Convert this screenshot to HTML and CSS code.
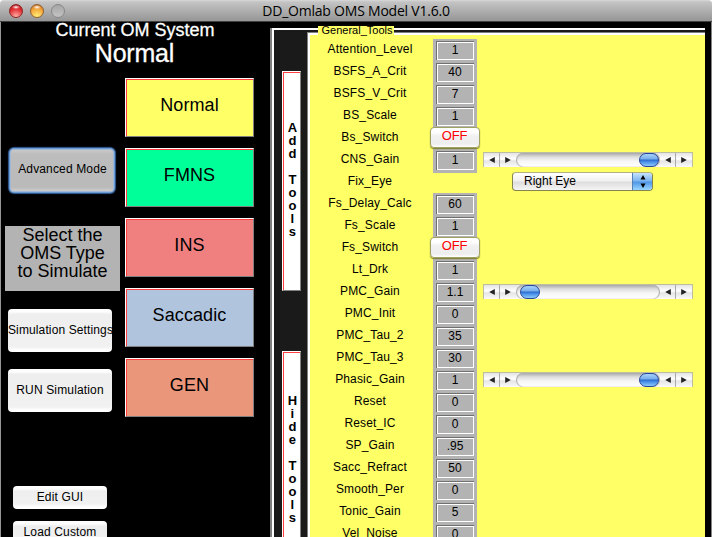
FILE: index.html
```html
<!DOCTYPE html>
<html lang="en">
<head>
<meta charset="utf-8">
<title>DD_Omlab OMS Model V1.6.0</title>
<link rel="stylesheet" href="styles.css">
</head>
<body>
<svg class="defs" aria-hidden="true">
  <symbol id="left" viewBox="0 0 6 6"><path d="M5.8 0V6L0.2 3z"/></symbol>
  <symbol id="right" viewBox="0 0 6 6"><path d="M0.2 0V6L5.8 3z"/></symbol>
</svg>
<div class="window">
  <header class="titlebar">
    <div class="lights"><i class="light red"></i><i class="light amber"></i><i class="light off"></i></div>
    <h1 class="title">DD_Omlab OMS Model V1.6.0</h1>
  </header>
  <main class="content">
    <section class="side">
      <div class="current">Current OM System</div>
      <div class="current-name">Normal</div>
      <div class="side-cols">
        <div class="actions">
          <button class="push advanced">Advanced Mode</button>
          <div class="hint">Select the<br>OMS Type<br>to Simulate</div>
          <button class="push settings">Simulation Settings</button>
          <button class="push run">RUN Simulation</button>
          <button class="push small edit">Edit GUI</button>
          <button class="push small load">Load Custom</button>
        </div>
        <div class="types">
          <button class="type normal">Normal</button>
          <button class="type fmns">FMNS</button>
          <button class="type ins">INS</button>
          <button class="type saccadic">Saccadic</button>
          <button class="type gen">GEN</button>
        </div>
      </div>
    </section>
    <section class="panel">
      <div class="strip">
        <button class="vert add">A<br>d<br>d<br><br>T<br>o<br>o<br>l<br>s</button>
        <button class="vert hide">H<br>i<br>d<br>e<br><br>T<br>o<br>o<br>l<br>s</button>
      </div>
      <div class="tools">
        <div class="legend">General_Tools</div>
        <div class="row"><span class="label">Attention_Level</span><div class="cell"><span class="value">1</span></div></div>
        <div class="row"><span class="label">BSFS_A_Crit</span><div class="cell"><span class="value">40</span></div></div>
        <div class="row"><span class="label">BSFS_V_Crit</span><div class="cell"><span class="value">7</span></div></div>
        <div class="row"><span class="label">BS_Scale</span><div class="cell"><span class="value">1</span></div></div>
        <div class="row"><span class="label">Bs_Switch</span><button class="toggle">OFF</button></div>
        <div class="row"><span class="label">CNS_Gain</span><div class="cell"><span class="value">1</span></div>
          <div class="slider"><b><svg><use href="#left"/></svg></b><b><svg><use href="#right"/></svg></b><div class="track high"><i></i></div><b><svg><use href="#left"/></svg></b><b><svg><use href="#right"/></svg></b></div></div>
        <div class="row"><span class="label">Fix_Eye</span><div class="select"><span>Right Eye</span><em><svg viewBox="0 0 6 13"><path d="M3 0L5.5 4.6H0.5zM3 13L5.5 8.4H0.5z"/></svg></em></div></div>
        <div class="row"><span class="label">Fs_Delay_Calc</span><div class="cell"><span class="value">60</span></div></div>
        <div class="row"><span class="label">Fs_Scale</span><div class="cell"><span class="value">1</span></div></div>
        <div class="row"><span class="label">Fs_Switch</span><button class="toggle">OFF</button></div>
        <div class="row"><span class="label">Lt_Drk</span><div class="cell"><span class="value">1</span></div></div>
        <div class="row"><span class="label">PMC_Gain</span><div class="cell"><span class="value">1.1</span></div>
          <div class="slider"><b><svg><use href="#left"/></svg></b><b><svg><use href="#right"/></svg></b><div class="track"><i></i></div><b><svg><use href="#left"/></svg></b><b><svg><use href="#right"/></svg></b></div></div>
        <div class="row"><span class="label">PMC_Init</span><div class="cell"><span class="value">0</span></div></div>
        <div class="row"><span class="label">PMC_Tau_2</span><div class="cell"><span class="value">35</span></div></div>
        <div class="row"><span class="label">PMC_Tau_3</span><div class="cell"><span class="value">30</span></div></div>
        <div class="row"><span class="label">Phasic_Gain</span><div class="cell"><span class="value">1</span></div>
          <div class="slider"><b><svg><use href="#left"/></svg></b><b><svg><use href="#right"/></svg></b><div class="track high"><i></i></div><b><svg><use href="#left"/></svg></b><b><svg><use href="#right"/></svg></b></div></div>
        <div class="row"><span class="label">Reset</span><div class="cell"><span class="value">0</span></div></div>
        <div class="row"><span class="label">Reset_IC</span><div class="cell"><span class="value">0</span></div></div>
        <div class="row"><span class="label">SP_Gain</span><div class="cell"><span class="value">.95</span></div></div>
        <div class="row"><span class="label">Sacc_Refract</span><div class="cell"><span class="value">50</span></div></div>
        <div class="row"><span class="label">Smooth_Per</span><div class="cell"><span class="value">0</span></div></div>
        <div class="row"><span class="label">Tonic_Gain</span><div class="cell"><span class="value">5</span></div></div>
        <div class="row"><span class="label">Vel_Noise</span><div class="cell"><span class="value">0</span></div></div>
      </div>
    </section>
  </main>
</div>
</body>
</html>
```
FILE: styles.css
```css
* { box-sizing: border-box; }
html, body { margin: 0; height: 537px; overflow: hidden; background: #fff; }
body { font: 12px "Liberation Sans", Arial, sans-serif; letter-spacing: .15px; color: #000; }
button { margin: 0; padding: 0; border: 0; font: inherit; letter-spacing: inherit; color: inherit; white-space: nowrap; }
.defs { position: absolute; width: 0; height: 0; }

.window { width: 712px; height: 537px; overflow: hidden; display: flex; flex-direction: column; }
.titlebar {
  flex: none; height: 22px; display: grid; grid-template-columns: 65px 1fr 65px; align-items: center;
  background: linear-gradient(#d8d8d8 0, #c4c4c4 2px, #989898 20px); border-bottom: 1px solid #404040;
  border-radius: 4px 4px 0 0;
}
.lights { display: flex; gap: 7px; padding-left: 9px; }
.light { width: 14px; height: 14px; border-radius: 50%; border: 1px solid #777; }
.light.red { border-color: #8d2525; background: radial-gradient(ellipse 4px 2px at 50% 18%, #fff, transparent), radial-gradient(circle at 50% 95%, #ffb0a8, #e22d31 60%, #a91119); }
.light.amber { border-color: #95602a; background: radial-gradient(ellipse 4px 2px at 50% 18%, #fff, transparent), radial-gradient(circle at 50% 95%, #fff27a, #f3a63b 60%, #b5641c); }
.light.off { border-color: #878787; background: linear-gradient(#a6a6a6, #c4c4c4); }
.title { margin: 0; text-align: center; font: 14px/20px "Open Sans", "Noto Sans", sans-serif; letter-spacing: -.22px; white-space: nowrap; }

.content { flex: 1; min-height: 0; display: flex; background: #000; border-left: 1px solid #959595; border-right: 1px solid #858585; }
.side { width: 269px; flex: none; }
.current { color: #fff; font-size: 18px; line-height: 16px; height: 17px; text-align: center; letter-spacing: 0; padding-right: 1px; -webkit-text-stroke: .3px #fff; }
.current-name { color: #fff; font-size: 25px; line-height: 28px; height: 39px; text-align: center; letter-spacing: -.2px; padding-right: 2px; -webkit-text-stroke: .3px #fff; }
.side-cols { display: flex; gap: 5px; padding-left: 4px; }
.actions { width: 115px; display: flex; flex-direction: column; align-items: flex-start; padding-top: 71px; }
.push {
  width: 104px; height: 43px; flex: none; border-radius: 4px; overflow: hidden; margin-left: 3px; padding-bottom: 2px;
  background: linear-gradient(#fff 0, #fdfdfd 3px, #eee 5px, #f1f1f1 calc(100% - 5px), #fff calc(100% - 2px));
}
.advanced {
  margin-left: 5px; padding-bottom: 3px; padding-left: 1px;
  background: linear-gradient(#ccc, #bdbdbd 5px, #bababa 38px, #d0d0d0);
  box-shadow: inset 0 0 0 1px #a0b8d8, 0 0 0 1px #6b9bd4, 0 0 1px 2px #345f96;
}
.hint { width: 115px; height: 65px; margin-top: 34px; background: #b3b3b3; font-size: 18px; line-height: 18px; text-align: center; letter-spacing: 0; }
.settings { margin-top: 18px; letter-spacing: .12px; text-align: left; }
.run { margin-top: 17px; }
.small { width: 94px; height: 23px; margin-left: 8px; }
.edit { margin-top: 74px; }
.load { margin-top: 12px; }
.types { display: flex; flex-direction: column; gap: 11px; }
.type {
  width: 129px; height: 59px; padding-bottom: 4px; font-size: 18px; letter-spacing: .1px;
  border: 1px solid #fff; border-right-color: #808080; border-bottom-color: #808080;
  box-shadow: inset 1px 1px 0 #ff4040;
}
.normal { background: #ffff66; }
.fmns { background: #00ff99; }
.ins { background: #f08080; }
.saccadic { background: #b0c4de; }
.gen { background: #e9967a; }

.panel {
  width: 435px; flex: none; margin-top: 6px; display: flex; background: #1a1a1a;
  border-left: 2px solid #808080; box-shadow: inset 2px 2px 0 #fff;
}
.strip { width: 35px; flex: none; padding: 43px 0 0 10px; }
.vert {
  display: block; width: 19px; height: 220px; padding: 0 0 4px 2px; background: #fff; font-weight: bold; font-size: 13px; line-height: 13px;
  border: 1px solid #fff; border-right-color: #808080; border-bottom-color: #808080; box-shadow: inset 1px 1px 0 #ff4040;
}
.hide { margin-top: 60px; }
.tools {
  position: relative; width: 398px; flex: none; margin-top: 4px; padding: 6px 0 0 2px; background: #ffff66;
  border: 1px solid #808080; border-width: 1px 0 0 1px; box-shadow: inset 2px 2px 0 #fff;
}
.legend { position: absolute; left: 10px; top: -7px; width: 76px; height: 10px; background: #ffff66; font-size: 11px; line-height: 9px; letter-spacing: 0; text-align: center; padding-left: 2px; }
.row { height: 22px; display: flex; align-items: flex-start; }
.label { width: 123px; padding-right: 3px; flex: none; text-align: center; line-height: 20px; }
.cell { width: 44px; height: 24px; flex: none; padding: 2px 3px; background: #b3b3b3; }
.value { display: block; height: 19px; border: solid #707070; border-width: 1px 0 0 1px; box-shadow: inset 0 0 0 1px #fff; text-align: center; line-height: 17px; letter-spacing: 0; padding-right: 1px; }
.toggle {
  position: relative; width: 50px; height: 21px; margin-left: -3px; flex: none; color: #f00; font-size: 13px; line-height: 16px; padding: 0 1px 4px 0; letter-spacing: -.2px;
  border-radius: 4px; background: linear-gradient(#fff, #fff 4px, #f0f0f0 8px, #eee 16px, #fff);
  border: 1px solid #a0a060; box-shadow: 0 1px 1px #77773a;
}
.slider { margin: 3px 0 0 6px; width: 210px; height: 15px; display: flex; background: linear-gradient(#e4e4e4, #fff 6px, #e5e5e5 8px, #fafafa); border: solid #bdbda0; border-width: 1px 1px 0; }
.slider b { width: 16px; flex: none; display: flex; align-items: center; justify-content: center; }
.slider b:first-child, .slider b:nth-child(4) { border-right: 1px solid #aaa; }
.slider svg { width: 6px; height: 6px; display: block; fill: #222; }
.track { width: 144px; flex: none; display: flex; padding: 0 1px 0 4px; border-radius: 8px; background: linear-gradient(#a9a9a9, #dedede 4px, #f6f6f6 8px, #fff); box-shadow: inset 1px 0 1px #aaa, inset -1px 0 1px #aaa; }
.track.high { justify-content: flex-end; }
.track i { width: 20px; height: 14px; border-radius: 7px; border: 1px solid #26469a; background: linear-gradient(#a8d0f8, #77aeea 5px, #2b6bd0 6px, #4d92e8 8px, #8cc9fb); }
.select {
  margin: 1px 0 0 79px; width: 141px; height: 19px; display: flex; justify-content: space-between; line-height: 17px; padding-left: 11px; letter-spacing: 0;
  border: 1px solid #85854e; border-top-color: #b0b080; border-radius: 4px; overflow: hidden; background: linear-gradient(#fff, #f0f0f0 8px, #ddd 9px, #f5f5f5);
}
.select em { width: 20px; display: flex; align-items: center; justify-content: center; background: linear-gradient(#c8e2fb, #7cb4ef 8px, #4e96e5 9px, #9bd6ff); border-left: 1px solid #5580b8; }
.select svg { width: 6px; height: 13px; display: block; }
```
